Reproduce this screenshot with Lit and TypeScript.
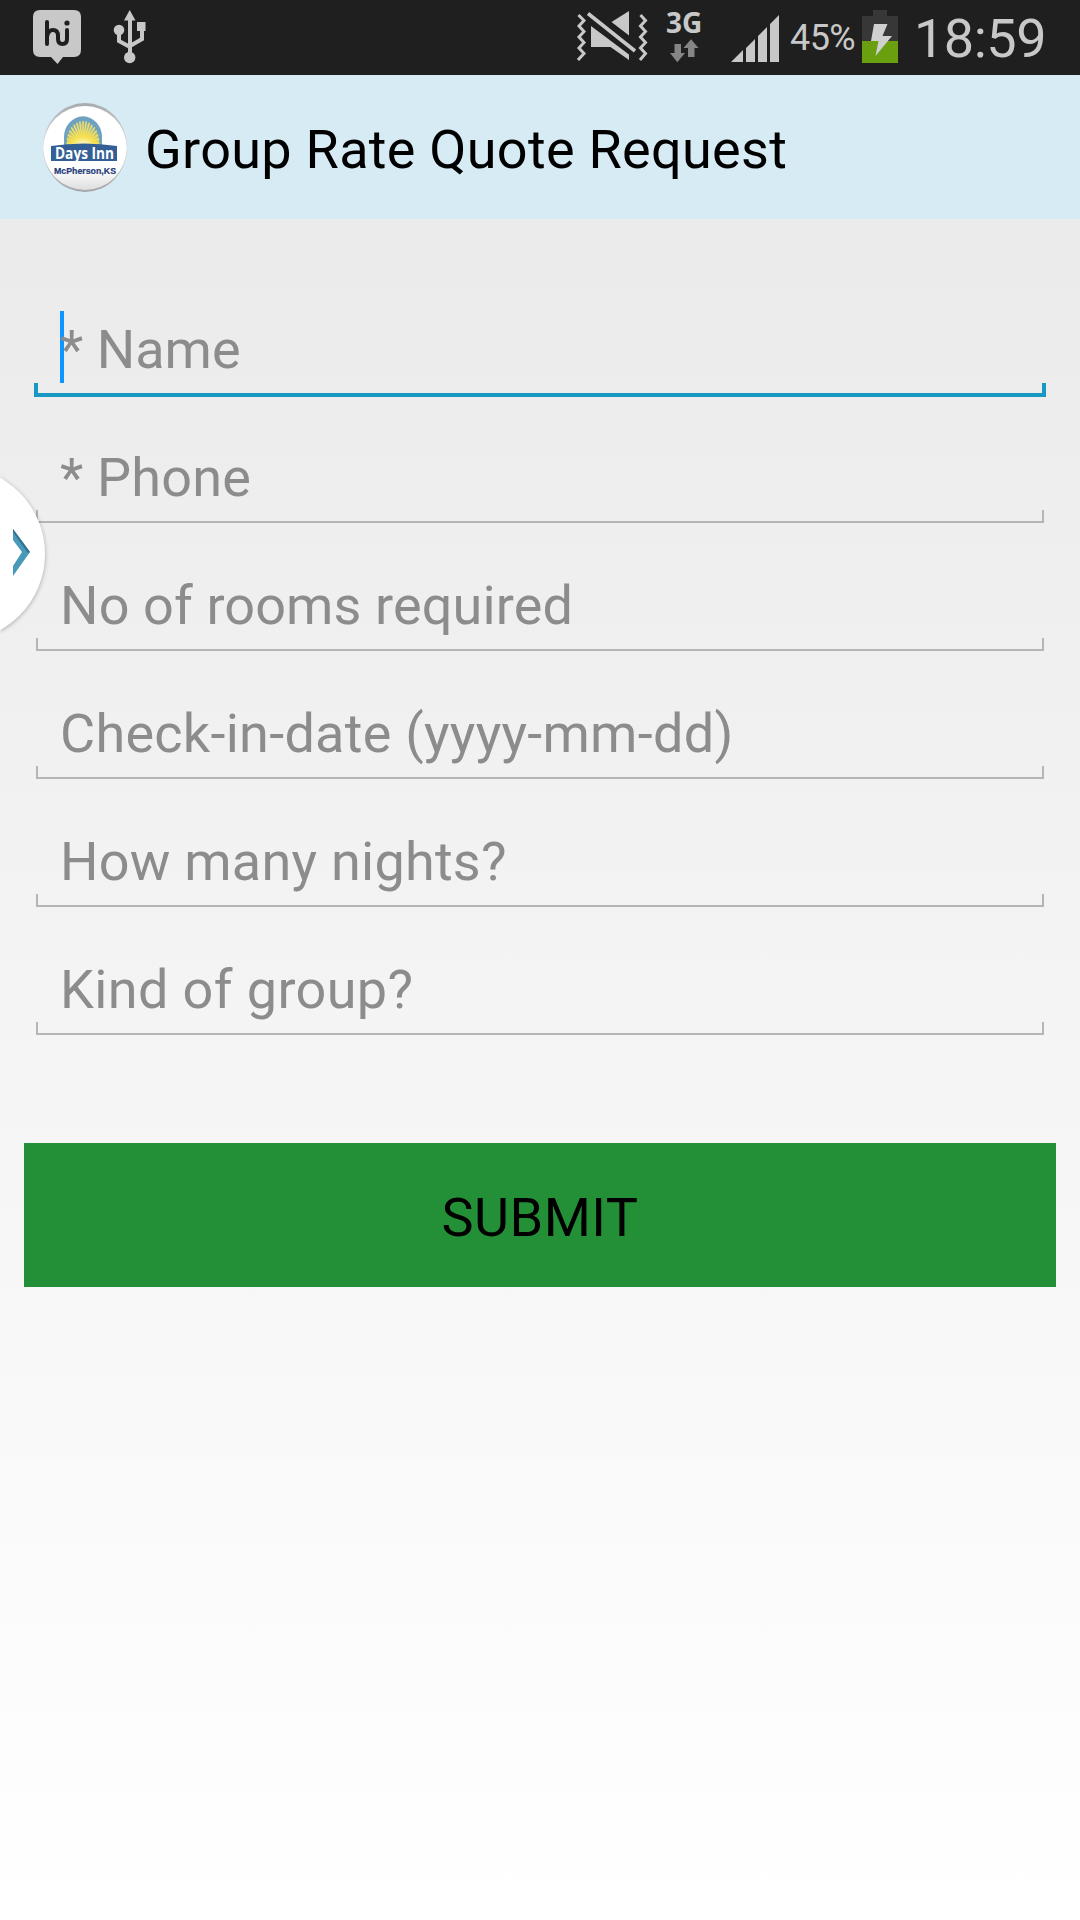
import { LitElement, html, svg, css } from "lit";
import { customElement, property } from "lit/decorators.js";
import { classMap } from "lit/directives/class-map.js";
import { styleMap } from "lit/directives/style-map.js";

@customElement("status-bar")
class StatusBar extends LitElement {
  static styles = css`
    :host { display: flex; height: 75px; background: #1f1f1f; color: #c8c8c8; justify-content: space-between; font-family: Roboto, sans-serif; }
    svg { display: block; flex: none; }
    .group { display: flex; height: 75px; }
    .left { padding-left: 33px; gap: 32px; }
    .right { padding-right: 34px; }
    .network { width: 40px; margin-left: 17px; }
    .tech { font: 700 28px/28px "Open Sans", sans-serif; padding: 8px 0 0 1px; height: 31px; white-space: nowrap; }
    .signal { margin-left: 25px; }
    .percent { font-size: 36px; line-height: 42px; padding-top: 17px; width: 69px; margin-left: 10px; letter-spacing: -0.6px; white-space: nowrap; }
    .battery { margin-left: 3px; }
    .clock { font-size: 54px; line-height: 64px; padding-top: 7px; margin-left: 16px; letter-spacing: -0.5px; white-space: nowrap; }
  `;
  render() {
    return html`
      <div class="group left">
        <svg width="48" height="75" viewBox="33 0 48 75">
          <path fill="#c8c8c8" d="M40 10H74Q81 10 81 17V50Q81 57 74 57H63L57.5 64L51 57H40Q33 57 33 50V17Q33 10 40 10Z"/>
          <path d="M47 22V44M47 37Q48 30 53 30Q58 30 58 36V39Q58 44 62.500 44Q67 44 67 39V30" fill="none" stroke="#1f1f1f" stroke-width="4" stroke-linecap="round"/>
          <circle cx="67" cy="23" r="2.600" fill="#1f1f1f"/>
        </svg>
        <svg width="34" height="75" viewBox="113 0 34 75">
          <path d="M130 16V56M119 31V41L130 47M142 30V39L130 46" fill="none" stroke="#c8c8c8" stroke-width="4"/>
          <path fill="#c8c8c8" d="M129.700 10L135.500 20.500H124ZM137 22H145.500V31H137Z"/>
          <circle cx="119" cy="30" r="5.300" fill="#c8c8c8"/><circle cx="129.700" cy="57.500" r="5.700" fill="#c8c8c8"/>
        </svg>
      </div>
      <div class="group right">
        <svg width="72" height="75" viewBox="577 0 72 75">
          <path d="M579.500 15L585 20.500L580 26L585 31.500L580 37L585 42.500L580 48L585 53.500L579 60M641.500 15L646.500 20.500L641.500 26L646.500 31.500L641.500 37L646.500 42.500L641.500 48L646.500 53.500L641 60" fill="none" stroke="#c8c8c8" stroke-width="3"/>
          <path d="M589 13.500L636 51" fill="none" stroke="#c8c8c8" stroke-width="3.600"/>
          <path fill="#c8c8c8" d="M592 26V47H611.500L630 60V54.500ZM612.500 22L630 11V35.500Z"/>
        </svg>
        <div class="network">
          <div class="tech">3G</div>
          <svg width="40" height="28" viewBox="665 39 40 28" fill="#858585">
            <path d="M674.500 44H681V53H685L677.300 62.300L670 53H674.500ZM688 57V48H683.500L691 39.300L698.500 48H694.500V57Z"/>
          </svg>
        </div>
        <svg class="signal" width="50" height="75" viewBox="730 0 50 75" fill="#c8c8c8">
          <path d="M731 62L743 50V62ZM746 62V48L755 39V62ZM758 62V36L767 27V62ZM770 62V24L779 15V62Z"/>
        </svg>
        <div class="percent">45%</div>
        <svg class="battery" width="36" height="75" viewBox="861 0 36 75">
          <path fill="#373737" d="M872 10H886V16H897V41H861V16H872Z"/>
          <path fill="#6aa010" d="M861 41H897V63H861Z"/>
          <path fill="#d0d0d0" d="M873 24H886.500L881.500 36H891L874.500 56L877.500 41H870Z"/>
        </svg>
        <div class="clock">18:59</div>
      </div>`;
  }
}

@customElement("inn-logo")
class InnLogo extends LitElement {
  static styles = css`
    :host { display: block; }
    svg { display: block; }
    .name { font: 700 15.5px "Open Sans", sans-serif; fill: #fff; }
    .town { font: 700 8.8px "Liberation Sans", sans-serif; fill: #233b78; stroke: #233b78; stroke-width: 0.2px; }
  `;
  render() {
    const rays = Array.from({ length: 17 }, (_, i) => {
      const a = Math.PI * (i / 16);
      return svg`<path d="M81 145L${81 - Math.cos(a) * 16.5} ${143 - Math.sin(a) * 22}" stroke="#f3e273" stroke-width="1.500"/>`;
    });
    return html`
      <svg width="88" height="92" viewBox="41 101 88 92">
        <defs>
          <linearGradient id="rim" x1="0" y1="0" x2="0" y2="1"><stop offset="0" stop-color="#a7abad"/><stop offset=".5" stop-color="#dfe3e5"/><stop offset="1" stop-color="#a2a5a8"/></linearGradient>
          <linearGradient id="face" x1="0" y1="0" x2="0" y2="1"><stop offset=".75" stop-color="#fff"/><stop offset="1" stop-color="#dedede"/></linearGradient>
          <radialGradient id="sun" cx=".5" cy="1" r="1"><stop offset="0" stop-color="#fffbd0"/><stop offset=".4" stop-color="#f5df4c"/><stop offset=".75" stop-color="#edd95c" stop-opacity=".3"/></radialGradient>
        </defs>
        <ellipse cx="85" cy="147.500" rx="42.300" ry="44.500" fill="url(#rim)"/>
        <ellipse cx="85" cy="148" rx="41.600" ry="42" fill="url(#face)"/>
        <path d="M64 145V137A17 18.500 0 0 1 102 137V145Z" fill="#6fa2bf"/>
        <g transform="translate(2 0)">${rays}</g>
        <path d="M67 145V141A16 18 0 0 1 99 141V145Z" fill="url(#sun)"/>
        <path d="M51 146Q84 141 117 146V161H51Z" fill="#345f96"/>
        <text class="name" x="55" y="158.500" textLength="59" lengthAdjust="spacingAndGlyphs">Days Inn</text>
        <text class="town" x="54" y="174" textLength="62" lengthAdjust="spacingAndGlyphs">McPherson,KS</text>
      </svg>`;
  }
}

@customElement("form-field")
class FormField extends LitElement {
  @property() label = "";
  @property({ type: Number }) tracking = 0;
  @property({ type: Boolean }) active = false;
  static styles = css`
    :host { display: block; height: 128px; }
    .text { padding: 46px 0 0 24px; box-sizing: border-box; height: 114px; font-size: 54px; line-height: 72px; color: #8c8c8c; white-space: nowrap; position: relative; }
    .line { box-sizing: border-box; height: 13px; border: 2px solid #b5b5b5; border-top: 0; }
    .line.active { height: 14px; margin: 1px -2px 0; border: 4px solid #1a98c4; border-top: 0; }
    .caret { position: absolute; left: 24px; top: 43px; width: 4px; height: 72px; background: #0d96ff; z-index: -1; }
  `;
  render() {
    return html`
      <div class="text" style=${styleMap({ letterSpacing: `${this.tracking}px` })}>${this.label}${this.active ? html`<span class="caret"></span>` : null}</div>
      <div class=${classMap({ line: true, active: this.active })}></div>`;
  }
}

@customElement("app-root")
class AppRoot extends LitElement {
  static styles = css`
    :host { display: block; width: 1080px; height: 1920px; overflow: hidden; position: relative; z-index: 0; background: linear-gradient(#e8e8e8, #fff); font-family: Roboto, sans-serif; }
    .header { display: flex; align-items: center; box-sizing: border-box; height: 144px; padding-left: 41px; gap: 16px; background: #d7ebf5; color: #000; }
    .title { margin: 0; font-size: 54px; line-height: 64px; font-weight: 400; letter-spacing: 0.29px; white-space: nowrap; padding-top: 5px; }
    .form { padding: 49px 36px 0; }
    .submit { display: flex; align-items: center; justify-content: center; width: 1032px; height: 144px; margin: 107px 24px 0; padding: 6px 0 0; box-sizing: border-box; border: 0; background: #239037; color: #000; font: 54px/64px Roboto, sans-serif; letter-spacing: 0.5px; }
    .handle { position: absolute; left: 0; top: 465px; filter: drop-shadow(0 1px 2px rgba(0, 0, 0, 0.3)); }
  `;
  private fields = [
    { label: "* Name", tracking: 0 },
    { label: "* Phone", tracking: 0.2 },
    { label: "No of rooms required", tracking: 0.12 },
    { label: "Check-in-date (yyyy-mm-dd)", tracking: 0.27 },
    { label: "How many nights?", tracking: 0.24 },
    { label: "Kind of group?", tracking: 0.38 },
  ];
  render() {
    return html`
      <status-bar></status-bar>
      <header class="header"><inn-logo></inn-logo><h1 class="title">Group Rate Quote Request</h1></header>
      <main class="form">
        ${this.fields.map((f, i) => html`<form-field .label=${f.label} .tracking=${f.tracking} .active=${i === 0}></form-field>`)}
      </main>
      <button class="submit">SUBMIT</button>
      <svg class="handle" width="60" height="180" viewBox="0 465 60 180">
        <circle cx="-42" cy="554" r="87" fill="#fff"/>
        <path d="M13 529L30 552L13 576V566L22 552L13 540Z" fill="#489ab8"/>
        <path d="M13 529L30 552L28 553L13 532Z" fill="#32718c"/>
      </svg>`;
  }
}
